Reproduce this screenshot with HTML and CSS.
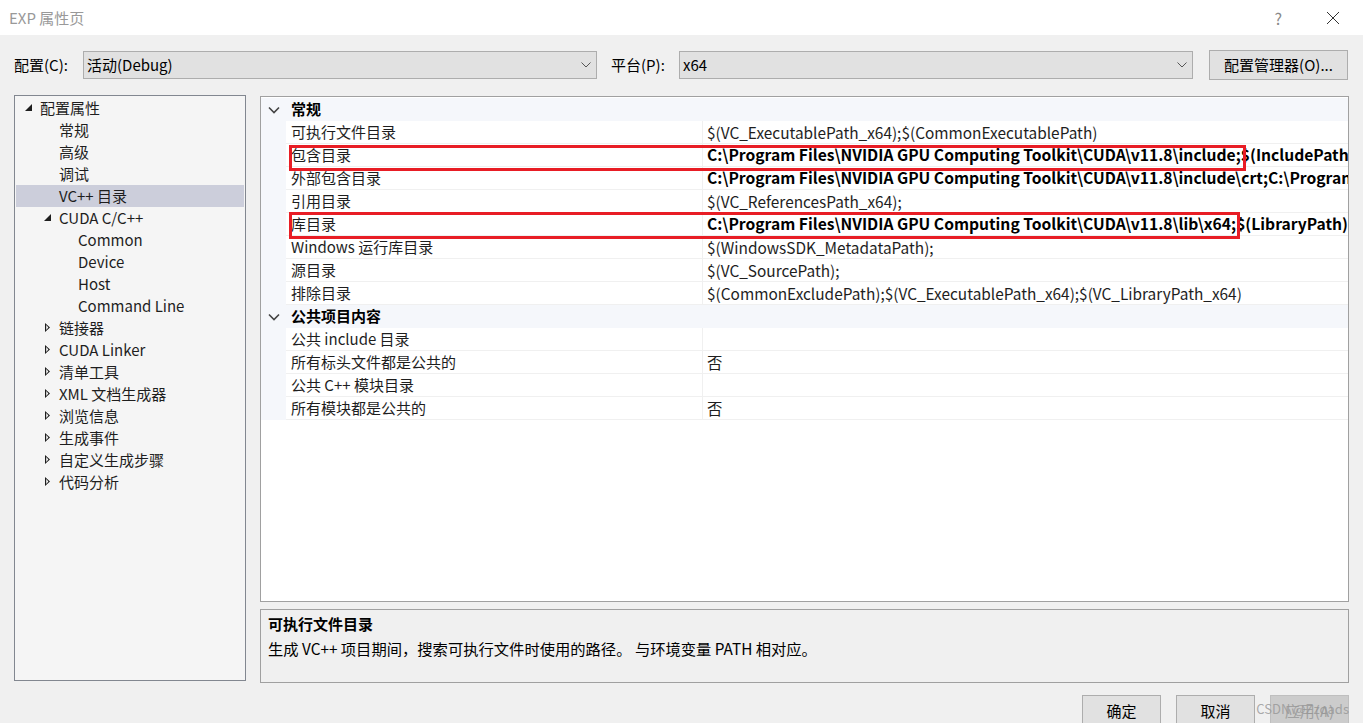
FILE: index.html
```html
<!DOCTYPE HTML>
<html lang="zh-CN">
<head>
  <title>EXP 属性页</title>
  <meta charset="utf-8">
  <link rel="stylesheet" href="styles.css">
</head>
<body>

<div class="titlebar">
  <span class="title">EXP 属性页</span>
  <span class="help">?</span>
  <svg class="close" width="14" height="14" viewBox="0 0 14 14"><path d="M1 1L13 13M13 1L1 13" stroke="#333" stroke-width="1"/></svg>
</div>

<div class="dialog">
  <div class="configrow">
    <span class="label">配置(C):</span>
    <div class="combo"><span>活动(Debug)</span><svg width="10" height="6" viewBox="0 0 10 6"><path d="M0.5 0.5L5 5L9.5 0.5" fill="none" stroke="#555"/></svg></div>
    <span class="label label2">平台(P):</span>
    <div class="combo"><span>x64</span><svg width="10" height="6" viewBox="0 0 10 6"><path d="M0.5 0.5L5 5L9.5 0.5" fill="none" stroke="#555"/></svg></div>
    <div class="btn btnwide">配置管理器(O)...</div>
  </div>

  <div class="content">
    <div class="tree">
      <div class="node l0"><span class="tw open"></span>配置属性</div>
      <div class="node l1">常规</div>
      <div class="node l1">高级</div>
      <div class="node l1">调试</div>
      <div class="node l1 selected">VC++ 目录</div>
      <div class="node l1"><span class="tw open"></span>CUDA C/C++</div>
      <div class="node l2">Common</div>
      <div class="node l2">Device</div>
      <div class="node l2">Host</div>
      <div class="node l2">Command Line</div>
      <div class="node l1"><span class="tw closed"></span>链接器</div>
      <div class="node l1"><span class="tw closed"></span>CUDA Linker</div>
      <div class="node l1"><span class="tw closed"></span>清单工具</div>
      <div class="node l1"><span class="tw closed"></span>XML 文档生成器</div>
      <div class="node l1"><span class="tw closed"></span>浏览信息</div>
      <div class="node l1"><span class="tw closed"></span>生成事件</div>
      <div class="node l1"><span class="tw closed"></span>自定义生成步骤</div>
      <div class="node l1"><span class="tw closed"></span>代码分析</div>
    </div>

    <div class="rightcol">
      <div class="grid">
        <div class="cat"><span class="gut"><svg width="12" height="8" viewBox="0 0 12 8"><path d="M1 1.5L6 6.5L11 1.5" fill="none" stroke="#444" stroke-width="1.6"/></svg></span><span class="catname">常规</span></div>
        <div class="row"><span class="gut"></span><span class="name">可执行文件目录</span><span class="val">$(VC_ExecutablePath_x64);$(CommonExecutablePath)</span></div>
        <div class="row"><span class="gut"></span><span class="name">包含目录</span><span class="val bold">C:\Program Files\NVIDIA GPU Computing Toolkit\CUDA\v11.8\include;$(IncludePath)</span></div>
        <div class="row"><span class="gut"></span><span class="name">外部包含目录</span><span class="val bold">C:\Program Files\NVIDIA GPU Computing Toolkit\CUDA\v11.8\include\crt;C:\Program Files</span></div>
        <div class="row"><span class="gut"></span><span class="name">引用目录</span><span class="val">$(VC_ReferencesPath_x64);</span></div>
        <div class="row"><span class="gut"></span><span class="name">库目录</span><span class="val bold">C:\Program Files\NVIDIA GPU Computing Toolkit\CUDA\v11.8\lib\x64;$(LibraryPath)</span></div>
        <div class="row"><span class="gut"></span><span class="name">Windows 运行库目录</span><span class="val">$(WindowsSDK_MetadataPath);</span></div>
        <div class="row"><span class="gut"></span><span class="name">源目录</span><span class="val">$(VC_SourcePath);</span></div>
        <div class="row"><span class="gut"></span><span class="name">排除目录</span><span class="val">$(CommonExcludePath);$(VC_ExecutablePath_x64);$(VC_LibraryPath_x64)</span></div>
        <div class="cat"><span class="gut"><svg width="12" height="8" viewBox="0 0 12 8"><path d="M1 1.5L6 6.5L11 1.5" fill="none" stroke="#444" stroke-width="1.6"/></svg></span><span class="catname">公共项目内容</span></div>
        <div class="row"><span class="gut"></span><span class="name">公共 include 目录</span><span class="val"></span></div>
        <div class="row"><span class="gut"></span><span class="name">所有标头文件都是公共的</span><span class="val">否</span></div>
        <div class="row"><span class="gut"></span><span class="name">公共 C++ 模块目录</span><span class="val"></span></div>
        <div class="row"><span class="gut"></span><span class="name">所有模块都是公共的</span><span class="val">否</span></div>

        <div class="mark mark1"></div>
        <div class="mark mark2"></div>
      </div>
      <div class="desc">
        <div class="desctitle">可执行文件目录</div>
        <div class="desctext">生成 VC++ 项目期间，搜索可执行文件时使用的路径。 与环境变量 PATH 相对应。</div>
      </div>
    </div>
  </div>

  <div class="buttons">
    <div class="btn">确定</div>
    <div class="btn">取消</div>
    <div class="btn disabled">应用(A)</div>
    <span class="watermark">CSDN @Zzqads</span>
  </div>
</div>

</body>
</html>
```

FILE: styles.css
```css
html, body {
  margin: 0;
  padding: 0;
}
body {
  width: 1363px;
  height: 723px;
  overflow: hidden;
  background: #f0f0f0;
  color: #000;
  font-family: "Noto Sans CJK SC", "Noto Sans", sans-serif;
  font-size: 15px;
  line-height: 20px;
}

.titlebar {
  height: 35px;
  background: #fff;
  display: flex;
  align-items: center;
  padding-left: 9px;
}
.title {
  color: #999;
  font-size: 15px;
  flex: 1;
}
.help {
  color: #888;
  font-size: 16px;
  margin-right: 44px;
}
.close {
  margin-right: 23px;
}

.dialog {
  padding: 0 14px;
}

.configrow {
  display: flex;
  align-items: center;
  margin-top: 15px;
  height: 30px;
}
.label {
  width: 69px;
  flex: none;
}
.label2 {
  margin-left: 14px;
  width: 68px;
}
.combo {
  width: 514px;
  flex: none;
  height: 28px;
  box-sizing: border-box;
  background: #e1e1e1;
  border: 1px solid #adadad;
  display: flex;
  align-items: center;
  justify-content: space-between;
  padding: 0 5px 0 3px;
}
.btn {
  width: 79px;
  flex: none;
  height: 30px;
  box-sizing: border-box;
  background: #e1e1e1;
  border: 1px solid #adadad;
  display: flex;
  align-items: center;
  justify-content: center;
}
.btnwide {
  width: 139px;
  margin-left: 16px;
}

.content {
  display: flex;
  gap: 14px;
  margin-top: 15px;
}

.tree {
  width: 232px;
  flex: none;
  height: 586px;
  box-sizing: border-box;
  background: #f5f5f5;
  border: 1px solid #828790;
  padding: 1px;
}
.node {
  height: 22px;
  line-height: 22px;
  display: flex;
  align-items: center;
  position: relative;
  color: #1e1e1e;
  white-space: nowrap;
}
.node.l0 { padding-left: 24px; }
.node.l1 { padding-left: 43px; }
.node.l2 { padding-left: 62px; }
.node.selected {
  background: #cccedb;
}
.tw {
  position: absolute;
  top: 7px;
}
.l0 .tw { left: 9px; }
.l1 .tw { left: 28px; }
.tw.open {
  width: 0;
  height: 0;
  border-left: 7px solid transparent;
  border-bottom: 7px solid #1e1e1e;
}
.tw.closed {
  top: 6px;
  left: 29px;
  width: 5px;
  height: 9px;
  background: #1e1e1e;
  clip-path: polygon(0 0, 100% 50%, 0 100%, 0 0, 1.2px 2px, 1.2px 7px, 3.4px 4.5px, 1.2px 2px);
}

.rightcol {
  flex: 1;
  min-width: 0;
  display: flex;
  flex-direction: column;
  gap: 7px;
  margin-top: 1px;
}

.grid {
  position: relative;
  height: 506px;
  box-sizing: border-box;
  background: #fff;
  border: 1px solid #a0a0a0;
  padding-top: 1px;
  overflow: hidden;
}
.cat, .row {
  display: flex;
  height: 23px;
  line-height: 22px;
  white-space: nowrap;
}
.cat {
  background: #f5f7fb;
}
.row {
  background: #fff;
}
.gut {
  width: 25px;
  flex: none;
  background: #f5f7fb;
  display: flex;
  align-items: center;
  justify-content: center;
}
.catname {
  font-weight: bold;
  padding-left: 5px;
}
.name {
  width: 411px;
  flex: none;
  padding-left: 5px;
  border-right: 1px solid #f0f0f0;
  border-bottom: 1px solid #f0f0f0;
  color: #1e1e1e;
}
.val {
  flex: 1;
  min-width: 0;
  padding-left: 4px;
  border-bottom: 1px solid #f0f0f0;
  overflow: hidden;
  color: #1e1e1e;
  font-size: 15.4px;
}
.val.bold {
  font-weight: bold;
  color: #000;
  font-size: 15.65px;
}

.mark {
  position: absolute;
  left: 28px;
  border: 3px solid #e81d25;
  box-sizing: border-box;
}
.mark1 {
  top: 48px;
  width: 957px;
  height: 26px;
}
.mark2 {
  top: 115px;
  width: 951px;
  height: 27px;
}

.desc {
  height: 74px;
  box-sizing: border-box;
  border: 1px solid #a0a0a0;
  background: #f0f0f0;
  padding: 3px 7px;
}
.desctitle {
  font-weight: bold;
  line-height: 22px;
}
.desctext {
  line-height: 26px;
  font-size: 15.3px;
}

.buttons {
  display: flex;
  justify-content: flex-end;
  gap: 15px;
  margin-top: 12px;
  position: relative;
}
.buttons .btn {
  height: 32px;
}
.btn.disabled {
  background: #cccccc;
  border-color: #bfbfbf;
  color: #a0a0a0;
}
.watermark {
  position: absolute;
  right: 0;
  top: 4px;
  color: rgba(150, 150, 150, 0.8);
  font-size: 13px;
}
```
